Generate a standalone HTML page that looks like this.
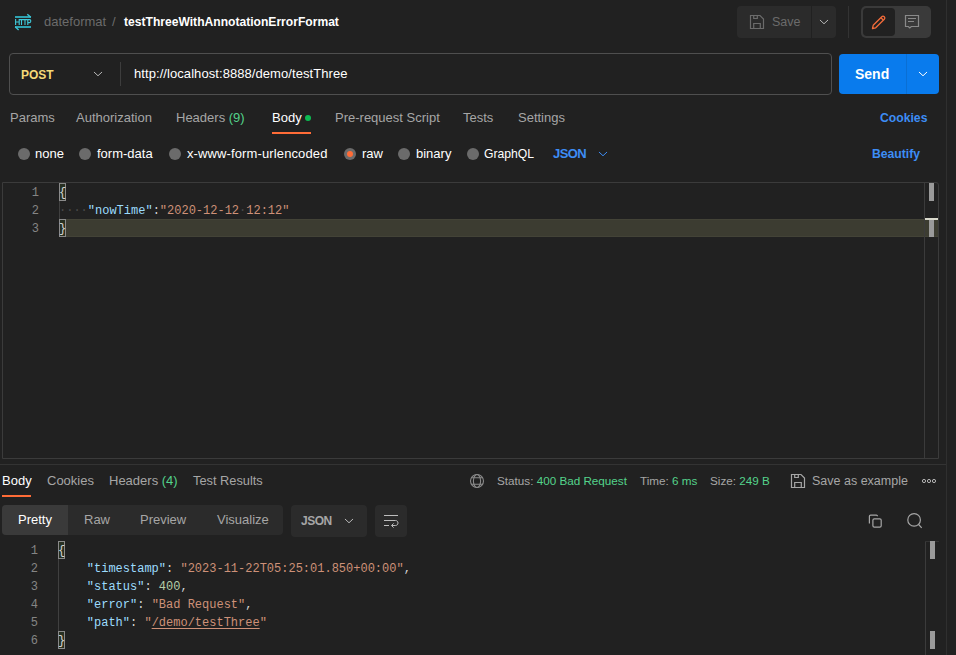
<!DOCTYPE html>
<html><head><meta charset="utf-8">
<style>
*{box-sizing:border-box;margin:0;padding:0}
html,body{width:956px;height:655px;overflow:hidden;background:#212121;font-family:"Liberation Sans",sans-serif;color:#a6a6a6}
.a{position:absolute;white-space:nowrap}
.t{position:absolute;white-space:nowrap;font-size:13px;line-height:16px}
.mono{font-family:"Liberation Mono",monospace}
.vl{position:absolute;background:#333}
.rd{position:absolute;width:12px;height:12px;border-radius:50%;background:#6b6b6b;top:148px}
.code{position:absolute;padding-top:1px;font-family:"Liberation Mono",monospace;font-size:12px;line-height:18px;white-space:pre;color:#d4d4d4}
.ln{position:absolute;padding-top:1px;font-family:"Liberation Mono",monospace;font-size:12px;line-height:18px;color:#858585;text-align:right;width:20px}
.k{color:#9cdcfe}.s{color:#ce9178}.n{color:#b5cea8}.p{color:#d4d4d4}
.bm{position:absolute;width:7px;height:18px;border:1px solid #8a8a8a;background:#283022}
.ws{color:#4a4a4a}
</style></head><body>
<!-- header -->
<svg class="a" style="left:0;top:0" width="40" height="40" viewBox="0 0 40 40" fill="none">
  <rect x="15" y="16" width="16" height="2" fill="#2fa3b2"/>
  <path d="M27.3 14.2L30.8 17.3" stroke="#3bc3d3" stroke-width="1.4"/>
  <rect x="15" y="26" width="16" height="2" fill="#2fa3b2"/>
  <path d="M15.2 26.8L18.6 29.9" stroke="#3bc3d3" stroke-width="1.4"/>
  <path d="M15.6 19V25M19.2 19V25M15.6 22H19.2M19.3 19.6H23.6M21.5 19.6V25M22.8 19.6H27.2M25 19.6V25M27.8 25V19.6H29.6C31.2 19.6 31.2 22.6 29.6 22.6H27.8" stroke="#3fcadb" stroke-width="1.1"/>
</svg>
<div class="t" style="left:44px;top:14px;color:#6b6b6b">dateformat</div>
<div class="t" style="left:112px;top:14px;color:#6b6b6b">/</div>
<div class="t" style="left:124px;top:14px;color:#fff;font-weight:bold;font-size:12.1px">testThreeWithAnnotationErrorFormat</div>

<!-- save group -->
<div class="a" style="left:737px;top:6px;width:74px;height:32px;background:#2b2b2b;border-radius:4px 0 0 4px"></div>
<div class="a" style="left:812px;top:6px;width:24px;height:32px;background:#2b2b2b;border-radius:0 4px 4px 0"></div>
<svg class="a" style="left:749px;top:14px" width="16" height="16" viewBox="0 0 16 16" fill="none" stroke="#6b6b6b" stroke-width="1.2">
  <path d="M1.5 1.5H11L14.5 5V14.5H1.5Z"/>
  <path d="M4.7 1.5V4.5H8.3V1.5"/>
  <path d="M4.7 14.5V9.5H11.3V14.5"/>
</svg>
<div class="t" style="left:772px;top:14px;color:#6b6b6b;font-size:12.5px">Save</div>
<svg class="a" style="left:812px;top:12px" width="24" height="20" viewBox="0 0 24 20" fill="none" stroke="#b8b8b8" stroke-width="1" stroke-linecap="round" stroke-linejoin="round"><path d="M8.25 8.25L12 11.75L15.75 8.25"/></svg>
<div class="vl" style="left:848px;top:6px;width:1px;height:32px;background:#333"></div>
<div class="a" style="left:861px;top:6px;width:70px;height:32px;background:#3a3a3a;border-radius:5px"></div>
<div class="a" style="left:863px;top:8px;width:32px;height:28px;background:#212121;border-radius:4px"></div>
<svg class="a" style="left:871px;top:14px" width="16" height="16" viewBox="0 0 16 16" fill="none" stroke="#f26b3a" stroke-width="1.3" stroke-linejoin="round">
  <path d="M1.5 14.5L2.2 11.3L10.8 2.7Q12 1.5 13.2 2.7L13.3 2.8Q14.5 4 13.3 5.2L4.7 13.8Z"/><path d="M10 3.8L12.2 6"/>
</svg>
<svg class="a" style="left:904px;top:14px" width="16" height="16" viewBox="0 0 16 16" fill="none" stroke="#8a8a8a" stroke-width="1.2">
  <path d="M1.5 1.5H14.5V12.5H7.3L5.8 14L4.3 12.5H1.5Z"/><path d="M4 4.5H12M4 7.5H10" stroke-width="1"/>
</svg>

<div class="vl" style="left:946px;top:0;width:1px;height:655px;background:#2f2f2f"></div>

<!-- url bar -->
<div class="a" style="left:9px;top:53px;width:823px;height:42px;border:1px solid #4f4f4f;border-radius:4px"></div>
<div class="t" style="left:21px;top:67px;font-weight:bold;color:#f4da78;font-size:12px">POST</div>
<svg class="a" style="left:86px;top:64px" width="24" height="20" viewBox="0 0 24 20" fill="none" stroke="#b8b8b8" stroke-width="1" stroke-linecap="round" stroke-linejoin="round"><path d="M8.25 8.25L12 11.75L15.75 8.25"/></svg>
<div class="vl" style="left:120px;top:62px;width:1px;height:24px;background:#3d3d3d"></div>
<div class="t" style="left:134px;top:66px;color:#fff;letter-spacing:0.07px">http://localhost:8888/demo/testThree</div>
<div class="a" style="left:839px;top:54px;width:100px;height:40px;background:#097bed;border-radius:4px"></div>
<div class="vl" style="left:906px;top:54px;width:1px;height:40px;background:#0a6fd4"></div>
<div class="t" style="left:855px;top:66px;font-size:14px;font-weight:bold;color:#fff">Send</div>
<svg class="a" style="left:911px;top:64px" width="24" height="20" viewBox="0 0 24 20" fill="none" stroke="#fff" stroke-width="1" stroke-linecap="round" stroke-linejoin="round"><path d="M8.25 8.25L12 11.75L15.75 8.25"/></svg>

<!-- tabs -->
<div class="t" style="left:10px;top:110px">Params</div>
<div class="t" style="left:76px;top:110px">Authorization</div>
<div class="t" style="left:176px;top:110px">Headers <span style="color:#54d38b">(9)</span></div>
<div class="t" style="left:272px;top:110px;color:#fff">Body</div>
<div class="a" style="left:305px;top:115px;width:6px;height:6px;border-radius:50%;background:#0cbb52"></div>
<div class="a" style="left:272px;top:132px;width:39px;height:2px;background:#ff6c37"></div>
<div class="t" style="left:335px;top:110px">Pre-request Script</div>
<div class="t" style="left:463px;top:110px">Tests</div>
<div class="t" style="left:518px;top:110px">Settings</div>
<div class="t" style="left:880px;top:110px;font-weight:bold;color:#3d8df5;font-size:12.2px">Cookies</div>

<!-- body types -->
<div class="rd" style="left:18px"></div>
<div class="t" style="left:35px;top:146px;color:#fff">none</div>
<div class="rd" style="left:79px"></div>
<div class="t" style="left:97px;top:146px;color:#fff">form-data</div>
<div class="rd" style="left:169px"></div>
<div class="t" style="left:187px;top:146px;color:#fff;letter-spacing:0.12px">x-www-form-urlencoded</div>
<div class="rd" style="left:344px;background:#6b6b6b"><div style="position:absolute;left:3px;top:3px;width:6px;height:6px;border-radius:50%;background:#ff6c37"></div></div>
<div class="t" style="left:362px;top:146px;color:#fff">raw</div>
<div class="rd" style="left:398px"></div>
<div class="t" style="left:416px;top:146px;color:#fff">binary</div>
<div class="rd" style="left:467px"></div>
<div class="t" style="left:484px;top:146px;color:#fff;font-size:12.2px">GraphQL</div>
<div class="t" style="left:553px;top:146px;font-weight:bold;color:#3d8df5;letter-spacing:-0.6px">JSON</div>
<svg class="a" style="left:591px;top:144px" width="24" height="20" viewBox="0 0 24 20" fill="none" stroke="#3d8df5" stroke-width="1" stroke-linecap="round" stroke-linejoin="round"><path d="M8.25 8.25L12 11.75L15.75 8.25"/></svg>
<div class="t" style="left:872px;top:146px;font-weight:bold;color:#3d8df5;font-size:12.2px">Beautify</div>

<!-- editor -->
<div class="a" style="left:2px;top:182px;width:937px;height:277px;border:1px solid #3b3b3b;border-radius:0 3px 0 0"></div>
<div class="a" style="left:59px;top:219px;width:879px;height:18px;background:#3c3c31;border-top:1px solid #434337;border-bottom:1px solid #434337"></div>
<div class="vl" style="left:924px;top:183px;width:1px;height:275px;background:#3b3b3b"></div>
<div class="a" style="left:925px;top:218px;width:13px;height:2px;background:#d9d9cc"></div>
<div class="a" style="left:929px;top:183px;width:5px;height:18px;background:#9a9a9a"></div>
<div class="a" style="left:929px;top:220px;width:5px;height:17px;background:#9a9a9a"></div>
<div class="vl" style="left:59px;top:201px;width:1px;height:18px;background:#404040"></div>
<div class="ln" style="left:19px;top:183px">1</div>
<div class="ln" style="left:19px;top:201px">2</div>
<div class="ln" style="left:19px;top:219px">3</div>
<div class="bm" style="left:59px;top:183px"></div>
<div class="bm" style="left:59px;top:219px"></div>
<div class="code" style="left:59px;top:183px">{
<span class="ws">····</span><span class="k">"nowTime"</span>:<span class="s">"2020-12-12<span class="ws">·</span>12:12"</span>
}</div>

<!-- separator -->
<div class="vl" style="left:0;top:464px;width:946px;height:1px"></div>

<!-- response tabs -->
<div class="t" style="left:2px;top:473px;color:#fff">Body</div>
<div class="a" style="left:2px;top:495px;width:29px;height:2px;background:#ff6c37"></div>
<div class="t" style="left:47px;top:473px">Cookies</div>
<div class="t" style="left:109px;top:473px">Headers <span style="color:#54d38b">(4)</span></div>
<div class="t" style="left:193px;top:473px;font-size:12.8px">Test Results</div>

<svg class="a" style="left:469px;top:473px" width="16" height="16" viewBox="0 0 16 16" fill="none" stroke="#8a8a8a" stroke-width="1.1">
  <circle cx="8" cy="8" r="6.5"/><ellipse cx="8" cy="8" rx="3.6" ry="6.5"/><path d="M2.5 4.8H13.5M2.5 11.2H13.5"/>
</svg>
<div class="t" style="left:497px;top:473px;font-size:11.7px">Status: <span style="color:#54d38b">400 Bad Request</span></div>
<div class="t" style="left:640px;top:473px;font-size:11.7px">Time: <span style="color:#54d38b">6 ms</span></div>
<div class="t" style="left:710px;top:473px;font-size:11.7px">Size: <span style="color:#54d38b">249 B</span></div>
<svg class="a" style="left:790px;top:473px" width="16" height="16" viewBox="0 0 16 16" fill="none" stroke="#a6a6a6" stroke-width="1.2">
  <path d="M1.5 1.5H11L14.5 5V14.5H1.5Z"/>
  <path d="M4.7 1.5V4.5H8.3V1.5"/>
  <path d="M4.7 14.5V9.5H11.3V14.5"/>
</svg>
<div class="t" style="left:812px;top:473px;font-size:12.5px">Save as example</div>
<svg class="a" style="left:921px;top:477px" width="16" height="8" viewBox="0 0 16 8" fill="none" stroke="#b5b5b5" stroke-width="1">
  <circle cx="3" cy="4" r="1.6"/><circle cx="8" cy="4" r="1.6"/><circle cx="13" cy="4" r="1.6"/>
</svg>

<!-- response toolbar -->
<div class="a" style="left:2px;top:505px;width:281px;height:30px;background:#2b2b2b;border-radius:4px"></div>
<div class="a" style="left:2px;top:505px;width:66px;height:30px;background:#3a3a3a;border-radius:4px 0 0 4px"></div>
<div class="t" style="left:18px;top:512px;color:#fff">Pretty</div>
<div class="t" style="left:84px;top:512px">Raw</div>
<div class="t" style="left:140px;top:512px">Preview</div>
<div class="t" style="left:217px;top:512px">Visualize</div>
<div class="a" style="left:291px;top:505px;width:76px;height:32px;background:#2b2b2b;border-radius:4px"></div>
<div class="t" style="left:301px;top:513px;font-size:12px;font-weight:bold;color:#a6a6a6;letter-spacing:-0.5px">JSON</div>
<svg class="a" style="left:337px;top:511px" width="24" height="20" viewBox="0 0 24 20" fill="none" stroke="#b8b8b8" stroke-width="1" stroke-linecap="round" stroke-linejoin="round"><path d="M8.25 8.25L12 11.75L15.75 8.25"/></svg>
<div class="a" style="left:375px;top:505px;width:32px;height:32px;background:#2b2b2b;border-radius:4px"></div>
<svg class="a" style="left:375px;top:505px" width="32" height="32" viewBox="0 0 32 32" fill="none" stroke="#bdbdbd" stroke-width="1">
  <path d="M9 10.5H23M9 15.5H20.5C23.8 15.5 23.8 20.5 20.5 20.5H16.8M9 20.5H14M18.6 18.4L16.5 20.5L18.6 22.6"/>
</svg>
<svg class="a" style="left:867px;top:513px" width="16" height="16" viewBox="0 0 16 16" fill="none" stroke="#a6a6a6" stroke-width="1.2">
  <path d="M2.4 10.5V3.3Q2.4 2.1 3.6 2.1H9.3Q10.5 2.1 10.5 3.2"/><rect x="5.9" y="5.9" width="8.3" height="8.3" rx="1.4"/>
</svg>
<svg class="a" style="left:906px;top:512px" width="17" height="17" viewBox="0 0 17 17" fill="none" stroke="#a6a6a6" stroke-width="1.2">
  <circle cx="8.1" cy="7.9" r="6.3"/><path d="M12.6 12.5L15.7 15.8"/>
</svg>

<!-- response code -->
<div class="vl" style="left:925px;top:541px;width:1px;height:114px;background:#3b3b3b"></div>
<div class="vl" style="left:925px;top:541px;width:14px;height:1px;background:#333"></div>
<div class="a" style="left:930px;top:541px;width:5px;height:18px;background:#9a9a9a"></div>
<div class="a" style="left:930px;top:631px;width:5px;height:18px;background:#9a9a9a"></div>
<div class="vl" style="left:58px;top:559px;width:1px;height:72px;background:#404040"></div>
<div class="ln" style="left:18px;top:541px;line-height:18px">1<br>2<br>3<br>4<br>5<br>6</div>
<div class="bm" style="left:58px;top:541px"></div>
<div class="bm" style="left:58px;top:631px"></div>
<div class="code" style="left:58px;top:541px">{
    <span class="k">"timestamp"</span>: <span class="s">"2023-11-22T05:25:01.850+00:00"</span>,
    <span class="k">"status"</span>: <span class="n">400</span>,
    <span class="k">"error"</span>: <span class="s">"Bad Request"</span>,
    <span class="k">"path"</span>: <span class="s">"<u style="text-underline-offset:2px">/demo/testThree</u>"</span>
}</div>

</body></html>
